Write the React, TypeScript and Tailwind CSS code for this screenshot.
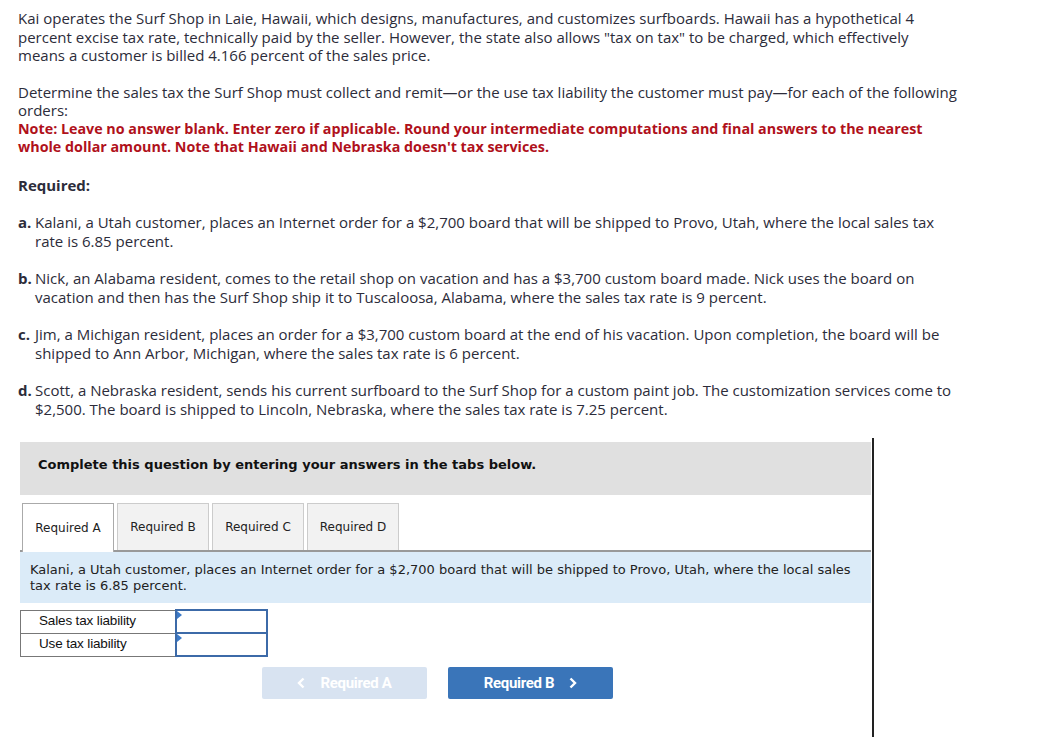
import React from "react";

const items = [
  {
    mark: "a.",
    text: "Kalani, a Utah customer, places an Internet order for a $2,700 board that will be shipped to Provo, Utah, where the local sales tax rate is 6.85 percent.",
  },
  {
    mark: "b.",
    text: "Nick, an Alabama resident, comes to the retail shop on vacation and has a $3,700 custom board made. Nick uses the board on vacation and then has the Surf Shop ship it to Tuscaloosa, Alabama, where the sales tax rate is 9 percent.",
  },
  {
    mark: "c.",
    text: "Jim, a Michigan resident, places an order for a $3,700 custom board at the end of his vacation. Upon completion, the board will be shipped to Ann Arbor, Michigan, where the sales tax rate is 6 percent.",
  },
  {
    mark: "d.",
    text: "Scott, a Nebraska resident, sends his current surfboard to the Surf Shop for a custom paint job. The customization services come to $2,500. The board is shipped to Lincoln, Nebraska, where the sales tax rate is 7.25 percent.",
  },
];

const tabs = ["Required A", "Required B", "Required C", "Required D"];

function Chevron({ dir }: { dir: "left" | "right" }) {
  return (
    <svg width="9" height="12" viewBox="0 0 9 12" fill="none">
      <path
        d={dir === "left" ? "M6.5 1.5 2 6l4.5 4.5" : "M2.5 1.5 7 6l-4.5 4.5"}
        stroke="currentColor"
        strokeWidth="2.4"
      />
    </svg>
  );
}

export default function App() {
  return (
    <div className="min-h-[737px] bg-white text-[#2c2c3a] font-['Open_Sans',sans-serif] text-[15px] leading-[18.5px]">
      <div className="w-[962px] pl-[18px] pt-[9px]">
        <p className="mr-[8px]">
          Kai operates the Surf Shop in Laie, Hawaii, which designs, manufactures, and customizes surfboards. Hawaii has a hypothetical 4 percent excise tax rate, technically paid by the seller. However, the state also allows "tax on tax" to be charged, which effectively means a customer is billed 4.166 percent of the sales price.
        </p>
        <p className="mt-[18px]">
          Determine the sales tax the Surf Shop must collect and remit—or the use tax liability the customer must pay—for each of the following orders:
        </p>
        <p className="font-bold text-[14.3px] text-[#b0111b]">
          Note: Leave no answer blank. Enter zero if applicable. Round your intermediate computations and final answers to the nearest whole dollar amount. Note that Hawaii and Nebraska doesn't tax services.
        </p>
        <p className="mt-[19px] font-bold">Required:</p>
        <div className="mt-[19px] flex flex-col gap-[19px]">
          {items.map((it) => (
            <div key={it.mark} className="flex">
              <span className="w-[17px] shrink-0 font-bold">{it.mark}</span>
              <span>{it.text}</span>
            </div>
          ))}
        </div>
      </div>

      <div className="ml-[20px] mt-[20px] w-[854px] border-r-2 border-[#222] pt-[4px] pb-[60px] font-['DejaVu_Sans',sans-serif] text-[13px]">
        <div className="mr-[1px] h-[53px] bg-[#e0e0e0] pl-[18px] pt-[14px] font-bold text-[#111]">
          Complete this question by entering your answers in the tabs below.
        </div>
        <div className="mt-[8px] flex gap-[3px] pl-[2px] text-[12px]">
          {tabs.map((t, i) => (
            <div
              key={t}
              className={
                i === 0
                  ? "relative z-10 -mb-[2px] flex h-[49px] w-[92px] items-center justify-center border border-b-0 border-[#aaa] bg-white pt-[1px] text-[#222]"
                  : "flex h-[47px] w-[92px] items-center justify-center border border-b-0 border-[#ccc] bg-[#f2f2f2] pt-[1px] text-[#222]"
              }
            >
              {t}
            </div>
          ))}
        </div>
        <div className="mr-[1px] border-t-2 border-[#999] bg-[#dbebf8] px-[10px] pt-[10px] pb-[9px] leading-[16px] text-[#222]">
          Kalani, a Utah customer, places an Internet order for a $2,700 board that will be shipped to Provo, Utah, where the local sales tax rate is 6.85 percent.
        </div>
        <table className="mt-[6px] border-collapse font-['Liberation_Sans',sans-serif] text-[13.5px] text-[#111]">
          <tbody>
            {["Sales tax liability", "Use tax liability"].map((l) => (
              <tr key={l}>
                <td className="h-[23px] w-[155px] border border-[#777] pl-[18px] tracking-[-0.15px]">{l}</td>
                <td className="relative h-[23px] w-[91px] border-2 border-[#3c6aa8] p-0">
                  <span className="absolute left-0 top-0 h-0 w-0 border-y-[4px] border-l-[5px] border-y-transparent border-l-[#3c7ac8]" />
                </td>
              </tr>
            ))}
          </tbody>
        </table>
        <div className="mt-[10px] flex gap-[21px] pl-[242px] font-['Roboto',sans-serif] text-[15px] font-bold text-white">
          <div className="flex h-[32px] w-[165px] items-center justify-center gap-[14px] rounded-[2px] bg-[#d8e3f1]">
            <Chevron dir="left" />
            <span className="tracking-[-0.3px]">Required A</span>
          </div>
          <div className="flex h-[32px] w-[165px] items-center justify-center gap-[14px] rounded-[2px] bg-[#3a75b9]">
            <span className="tracking-[-0.3px]">Required B</span>
            <Chevron dir="right" />
          </div>
        </div>
      </div>
    </div>
  );
}
